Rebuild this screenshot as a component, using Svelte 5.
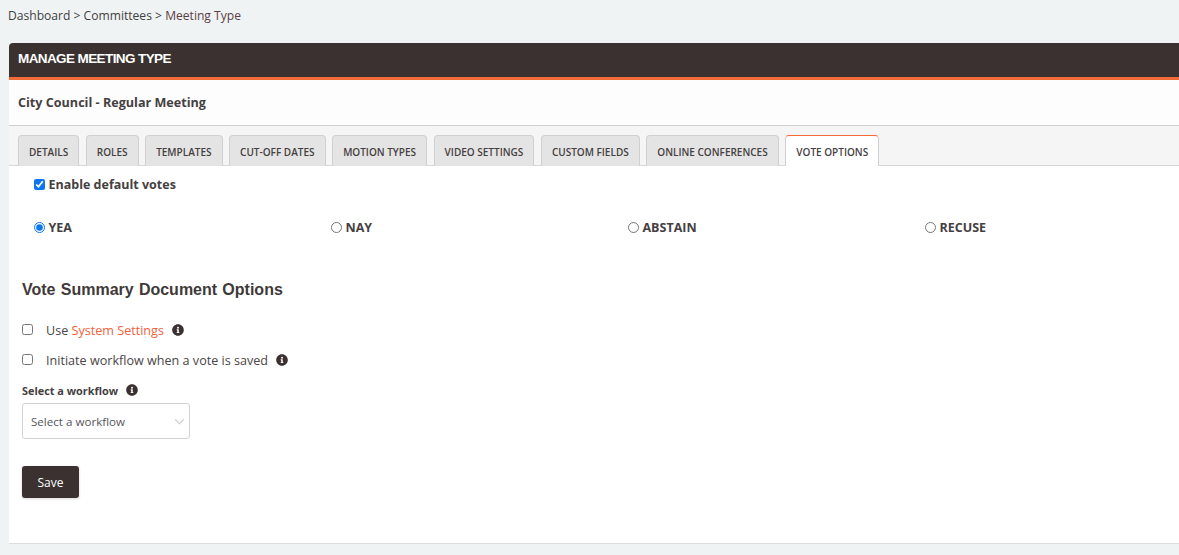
<script lang="ts">
  const tabs = ['Details', 'Roles', 'Templates', 'Cut-off Dates', 'Motion Types', 'Video Settings', 'Custom Fields', 'Online Conferences', 'Vote Options'];
  const activeTab = 'Vote Options';
  const voteOptions = ['YEA', 'NAY', 'ABSTAIN', 'RECUSE'];
</script>

{#snippet info()}
  <svg class="info" viewBox="0 0 512 512" width="12" height="12" aria-hidden="true">
    <path fill="#3b3130" d="M256 8C119 8 8 119 8 256s111 248 248 248 248-111 248-248S393 8 256 8zm0 110a42 42 0 1 1 0 84 42 42 0 0 1 0-84zm56 254c0 7-5 12-12 12h-88c-7 0-12-5-12-12v-24c0-7 5-12 12-12h12v-64h-12c-7 0-12-5-12-12v-24c0-7 5-12 12-12h64c7 0 12 5 12 12v100h12c7 0 12 5 12 12v24z"/>
  </svg>
{/snippet}

<div class="page">
  <nav class="crumbs">Dashboard &gt; Committees &gt; <span class="current">Meeting Type</span></nav>

  <section class="card">
    <header class="title">Manage Meeting Type</header>
    <div class="subtitle">City Council - Regular Meeting</div>

    <div class="tabs">
      {#each tabs as tab}
        <div class="tab" class:active={tab === activeTab}>{tab}</div>
      {/each}
    </div>

    <div class="content">
      <label class="enable">
        <input type="checkbox" checked />
        <span>Enable default votes</span>
      </label>

      <div class="votes">
        {#each voteOptions as option, i}
          <label class="vote">
            <input type="radio" name="vote" checked={i === 0} />
            <span>{option}</span>
          </label>
        {/each}
      </div>

      <h2>Vote Summary Document Options</h2>

      <div class="check-row">
        <input type="checkbox" />
        <span>Use <span class="link">System Settings</span></span>
        {@render info()}
      </div>
      <div class="check-row second">
        <input type="checkbox" />
        <span>Initiate workflow when a vote is saved</span>
        {@render info()}
      </div>

      <div class="field-label">
        <span>Select a workflow</span>
        {@render info()}
      </div>
      <div class="select">
        <span>Select a workflow</span>
        <svg viewBox="0 0 12 8" width="11" height="7" aria-hidden="true">
          <path d="M1 1.5l5 5 5-5" fill="none" stroke="#d4d4d4" stroke-width="1.6" />
        </svg>
      </div>

      <button type="button" class="save">Save</button>
    </div>
  </section>
</div>

<style>
  :global(body) {
    margin: 0;
    background: #f0f3f4;
    overflow: hidden;
  }

  .page {
    height: 555px;
    padding-left: 9px;
    font-family: "Open Sans", sans-serif;
    color: #3b3130;
    box-sizing: border-box;
  }

  .crumbs {
    height: 43px;
    margin-left: -1px;
    padding-top: 7px;
    box-sizing: border-box;
    font-size: 12.1px;
    line-height: 18px;
    color: #3f3f3f;
  }

  .current {
    color: #5a3f45;
  }

  .card {
    height: 501px;
    background: #fff;
    border-bottom: 1px solid #dcdfe0;
    box-sizing: border-box;
  }

  .title {
    height: 37px;
    padding: 0 9px 4px;
    box-sizing: border-box;
    display: flex;
    align-items: center;
    background: #3b3130;
    border-bottom: 3px solid #f26a35;
    border-radius: 4px 0 0 0;
    color: #fff;
    font-family: "Liberation Sans", Arial, sans-serif;
    font-size: 13.5px;
    font-weight: 700;
    text-transform: uppercase;
    letter-spacing: -0.6px;
  }

  .subtitle {
    height: 46px;
    padding: 0 9px;
    box-sizing: border-box;
    display: flex;
    align-items: center;
    background: #fdfdfd;
    border-bottom: 1px solid #cfcfcf;
    font-size: 12.6px;
    font-weight: 700;
    color: #45403f;
  }

  .tabs {
    height: 40px;
    padding: 9px 0 0 9px;
    box-sizing: border-box;
    display: flex;
    gap: 6.6px;
    background: #f5f5f5;
    border-bottom: 1px solid #d8d8d8;
  }

  .tab {
    height: 31px;
    padding: 1px 10px 0;
    box-sizing: border-box;
    display: flex;
    align-items: center;
    background: #e4e4e4;
    border: 1px solid #d0d0d0;
    border-bottom: 0;
    border-radius: 4px 4px 0 0;
    font-size: 10px;
    font-weight: 600;
    text-transform: uppercase;
    white-space: nowrap;
    color: #45403f;
  }

  .tab.active {
    background: #fff;
    border-top-color: #f26a35;
  }

  .content {
    padding-left: 13px;
  }

  label {
    display: flex;
    align-items: center;
    gap: 3.5px;
    font-size: 12.5px;
    font-weight: 700;
    color: #45403f;
  }

  input {
    width: 11px;
    height: 11px;
    margin: 0;
    accent-color: #0b76ef;
  }

  .enable {
    height: 18px;
    margin: 9px 0 0 12px;
  }

  .votes {
    display: grid;
    grid-template-columns: repeat(4, 297px);
    margin: 25px 0 0 12px;
  }

  .vote {
    height: 18px;
  }

  h2 {
    margin: 44px 0 0;
    font-family: "Liberation Sans", Arial, sans-serif;
    font-size: 16px;
    line-height: 20px;
    font-weight: 700;
    word-spacing: 0.8px;
    color: #3f3a3a;
  }

  .check-row {
    display: flex;
    align-items: center;
    height: 18px;
    margin-top: 21px;
    font-size: 12.6px;
    color: #4a4546;
  }

  .check-row.second {
    margin-top: 12px;
  }

  .check-row input {
    margin-right: 13px;
    transform: translateY(-1px);
  }

  .link {
    color: #f4603a;
  }

  .info {
    margin-left: 8px;
  }

  .field-label {
    display: flex;
    align-items: center;
    height: 16px;
    margin-top: 13px;
    font-size: 10.9px;
    font-weight: 700;
    color: #45403f;
  }

  .select {
    width: 168px;
    height: 36px;
    margin-top: 5px;
    padding: 0 4px 0 8px;
    box-sizing: border-box;
    display: flex;
    align-items: center;
    justify-content: space-between;
    border: 1px solid #d2d2d2;
    border-radius: 3px;
    font-size: 11.6px;
    color: #55565a;
  }

  .save {
    display: block;
    width: 57px;
    height: 32px;
    margin-top: 27px;
    padding: 0;
    border: 0;
    border-radius: 3px;
    background: #3b3130;
    color: #fff;
    font-family: inherit;
    font-size: 12px;
    box-shadow: 0 1px 3px rgba(0, 0, 0, 0.15);
  }
</style>
